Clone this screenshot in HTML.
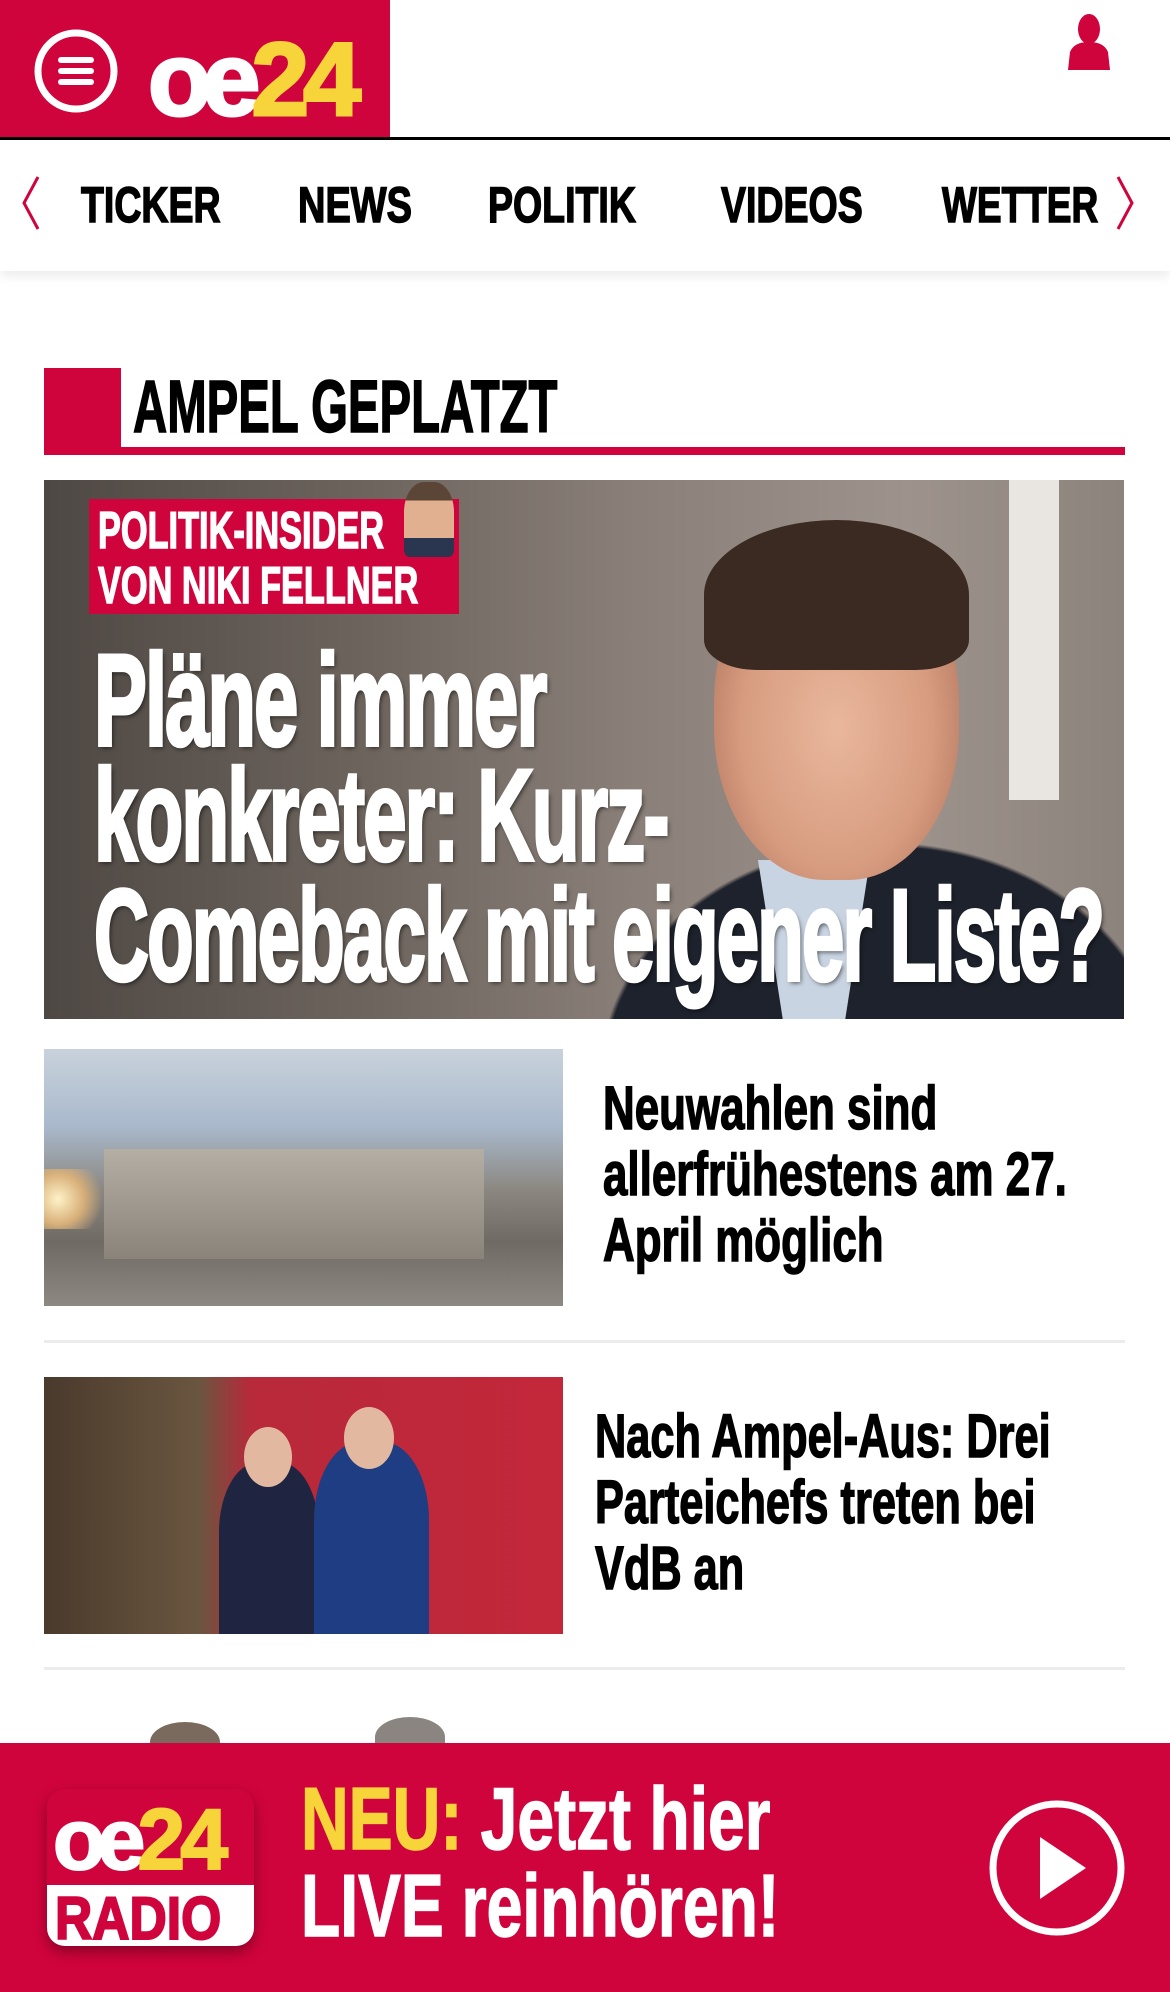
<!DOCTYPE html>
<html><head><meta charset="utf-8">
<style>
*{margin:0;padding:0;box-sizing:border-box}
body{width:1170px;height:1992px;position:relative;overflow:hidden;background:#fff;font-family:"Liberation Sans",sans-serif;font-weight:bold}
.a{position:absolute;white-space:nowrap;transform-origin:0 50%;line-height:1}
.red{background:#d0043c}
.h{-webkit-text-stroke:1.5px currentColor}
</style></head><body>
<!-- header -->
<div class="a red" style="left:0;top:0;width:390px;height:137px"></div>
<svg class="a" style="left:33px;top:28px" width="86" height="86" viewBox="0 0 86 86"><circle cx="43" cy="43" r="38" fill="none" stroke="#fff" stroke-width="7"/><rect x="25" y="29" width="36" height="6" rx="3" fill="#fff"/><rect x="25" y="40" width="36" height="6" rx="3" fill="#fff"/><rect x="25" y="51" width="36" height="6" rx="3" fill="#fff"/></svg>
<div class="a h" style="left:148px;top:28px;font-size:104px;letter-spacing:-9px;color:#fff;-webkit-text-stroke:3px #fff">oe<span style="color:#f7d53a;-webkit-text-stroke:3px #f7d53a;letter-spacing:-6px">24</span></div>
<svg class="a" style="left:1064px;top:12px" width="50" height="58" viewBox="0 0 50 58"><ellipse cx="25" cy="17" rx="11" ry="15" fill="#d0043c"/><path d="M4 58 L6 40 Q10 30 25 30 Q40 30 44 40 L46 58Z" fill="#d0043c"/></svg>
<div class="a" style="left:0;top:137px;width:1170px;height:3px;background:#000"></div>
<!-- nav -->
<div class="a" style="left:0;top:140px;width:1170px;height:131px;background:#fff;box-shadow:0 6px 10px rgba(0,0,0,0.07)"></div>
<svg class="a" style="left:18px;top:175px" width="24" height="56" viewBox="0 0 24 56"><path d="M20 2 L6 28 L20 54" fill="none" stroke="#d0043c" stroke-width="3"/></svg>
<svg class="a" style="left:1114px;top:175px" width="24" height="56" viewBox="0 0 24 56"><path d="M4 2 L18 28 L4 54" fill="none" stroke="#d0043c" stroke-width="3"/></svg>
<div class="a h" style="left:81px;top:180px;font-size:50px;transform:scaleX(0.75)">TICKER</div>
<div class="a h" style="left:298px;top:180px;font-size:50px;transform:scaleX(0.76)">NEWS</div>
<div class="a h" style="left:488px;top:180px;font-size:50px;transform:scaleX(0.75)">POLITIK</div>
<div class="a h" style="left:721px;top:180px;font-size:50px;transform:scaleX(0.75)">VIDEOS</div>
<div class="a h" style="left:942px;top:180px;font-size:50px;transform:scaleX(0.74)">WETTER</div>
<!-- section header -->
<div class="a red" style="left:44px;top:368px;width:77px;height:87px"></div>
<div class="a red" style="left:44px;top:447px;width:1081px;height:8px"></div>
<div class="a h" style="left:133px;top:370px;font-size:74px;transform:scaleX(0.64)">AMPEL GEPLATZT</div>
<!-- hero -->
<div class="a" style="left:44px;top:480px;width:1080px;height:539px;overflow:hidden;background:linear-gradient(90deg,#4e4844 0%,#6d645d 30%,#8a8079 55%,#9d938c 80%,#8c837c 100%)">
 <div class="a" style="left:965px;top:0;width:50px;height:320px;background:#e9e6e1"></div>
 <div class="a" style="left:480px;top:300px;width:600px;height:300px;background:radial-gradient(ellipse at 60% 100%,#1e222c 0%,#1e222c 55%,transparent 56%)"></div>
 <div class="a" style="left:700px;top:380px;width:140px;height:180px;background:#c9d4e2;clip-path:polygon(10% 0,90% 0,70% 100%,30% 100%)"></div>
 <div class="a" style="left:670px;top:60px;width:245px;height:340px;border-radius:48% 48% 45% 45%;background:radial-gradient(ellipse at 50% 55%,#e9b79c 0%,#d79c80 55%,#b77c62 80%)"></div>
 <div class="a" style="left:660px;top:40px;width:265px;height:150px;border-radius:50% 50% 20% 20%;background:#3a2a22"></div>
 <div class="a red" style="left:45px;top:19px;width:370px;height:115px"></div>
 <div class="a" style="left:360px;top:2px;width:50px;height:75px;border-radius:40% 40% 10% 10%;background:linear-gradient(#5b4536 0 25%,#e1b090 25% 75%,#2a3650 75%)"></div>
 <div class="a h" style="left:54px;top:25px;font-size:52px;color:#fff;transform:scaleX(0.66)">POLITIK-INSIDER</div>
 <div class="a h" style="left:54px;top:80px;font-size:52px;color:#fff;transform:scaleX(0.66)">VON NIKI FELLNER</div>
 <div class="a" style="left:50px;top:155px;font-size:130px;color:#fff;letter-spacing:-3px;-webkit-text-stroke:4px #fff;transform:scaleX(0.61);text-shadow:3px 3px 6px rgba(0,0,0,.6)">Pläne immer</div>
 <div class="a" style="left:50px;top:270px;font-size:130px;color:#fff;letter-spacing:-3px;-webkit-text-stroke:4px #fff;transform:scaleX(0.60);text-shadow:3px 3px 6px rgba(0,0,0,.6)">konkreter: Kurz-</div>
 <div class="a" style="left:50px;top:390px;font-size:130px;color:#fff;letter-spacing:-3px;-webkit-text-stroke:4px #fff;transform:scaleX(0.585);text-shadow:3px 3px 6px rgba(0,0,0,.6)">Comeback mit eigener Liste?</div>
</div>
<!-- article 1 -->
<div class="a" style="left:44px;top:1049px;width:519px;height:257px;overflow:hidden;background:linear-gradient(180deg,#c9d2dc 0%,#a9b9cc 30%,#8b8780 55%,#6f6a64 75%,#8d8982 100%)">
 <div class="a" style="left:60px;top:100px;width:380px;height:110px;background:linear-gradient(#b5aea4,#8a837a)"></div>
 <div class="a" style="left:0;top:120px;width:70px;height:60px;background:radial-gradient(circle at 20% 50%,#fff2c8,#d8b07a 40%,transparent 70%)"></div>
</div>
<div class="a h" style="left:603px;top:1078px;font-size:61px;transform:scaleX(0.72)">Neuwahlen sind</div>
<div class="a h" style="left:603px;top:1144px;font-size:61px;transform:scaleX(0.72)">allerfrühestens am 27.</div>
<div class="a h" style="left:603px;top:1210px;font-size:61px;transform:scaleX(0.72)">April möglich</div>
<div class="a" style="left:44px;top:1340px;width:1081px;height:3px;background:#ececec"></div>
<!-- article 2 -->
<div class="a" style="left:44px;top:1377px;width:519px;height:257px;overflow:hidden;background:linear-gradient(90deg,#4a3a2c 0%,#6a5640 30%,#b8293a 40%,#c3273a 100%)">
 <div class="a" style="left:175px;top:85px;width:100px;height:175px;background:#1f2440;border-radius:40% 40% 0 0"></div>
 <div class="a" style="left:270px;top:65px;width:115px;height:195px;background:#1e3d82;border-radius:40% 40% 0 0"></div>
 <div class="a" style="left:200px;top:50px;width:48px;height:60px;border-radius:50%;background:#e2b9a0"></div>
 <div class="a" style="left:300px;top:30px;width:50px;height:62px;border-radius:50%;background:#e2b9a0"></div>
</div>
<div class="a h" style="left:595px;top:1406px;font-size:61px;transform:scaleX(0.71)">Nach Ampel-Aus: Drei</div>
<div class="a h" style="left:595px;top:1472px;font-size:61px;transform:scaleX(0.71)">Parteichefs treten bei</div>
<div class="a h" style="left:595px;top:1538px;font-size:61px;transform:scaleX(0.71)">VdB an</div>
<div class="a" style="left:44px;top:1667px;width:1081px;height:3px;background:#ececec"></div>
<div class="a" style="left:150px;top:1722px;width:70px;height:40px;border-radius:50% 50% 0 0;background:#7a6a5e"></div>
<div class="a" style="left:375px;top:1717px;width:70px;height:40px;border-radius:50% 50% 0 0;background:#8a8580"></div>
<!-- banner -->
<div class="a red" style="left:0;top:1743px;width:1170px;height:249px"></div>
<div class="a" style="left:47px;top:1789px;width:207px;height:157px;border-radius:18px;background:#d0043c;box-shadow:0 6px 14px rgba(0,0,0,.35);overflow:hidden">
 <div class="a" style="left:6px;top:8px;font-size:86px;letter-spacing:-8px;color:#fff;-webkit-text-stroke:2px #fff">oe<span style="color:#f7d53a;-webkit-text-stroke:2px #f7d53a;letter-spacing:-5px">24</span></div>
 <div class="a" style="left:0;top:96px;width:207px;height:61px;background:#fff"></div>
 <div class="a" style="left:8px;top:100px;font-size:60px;color:#d0043c;-webkit-text-stroke:2px #d0043c;transform:scaleX(0.86)">RADIO</div>
</div>
<div class="a h" style="left:301px;top:1775px;font-size:88px;color:#fff;transform:scaleX(0.75)"><span style="color:#f7d53a">NEU:</span> Jetzt hier</div>
<div class="a h" style="left:301px;top:1862px;font-size:88px;color:#fff;transform:scaleX(0.73)">LIVE reinhören!</div>
<svg class="a" style="left:988px;top:1799px" width="138" height="138" viewBox="0 0 138 138"><circle cx="69" cy="69" r="64" fill="none" stroke="#fff" stroke-width="7"/><path d="M52 38 L98 69 L52 100Z" fill="#fff"/></svg>
</body></html>
